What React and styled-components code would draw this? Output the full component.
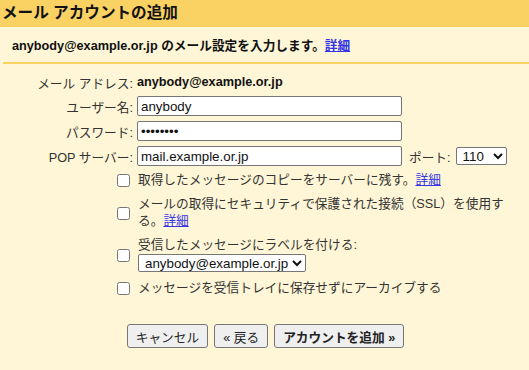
import React, { useState } from 'react';
import styled, { createGlobalStyle } from 'styled-components';

const GlobalStyle = createGlobalStyle`
  html, body {
    margin: 0;
    padding: 0;
    background: #fef6d6;
  }
  body {
    font-family: "Liberation Sans", "Noto Sans CJK JP", sans-serif;
    font-size: 12.7px;
    color: #222;
  }
`;

const Page = styled.div`
  width: 529px;
  min-height: 370px;
  background: #fef6d6;
`;

const Title = styled.h1`
  margin: 0;
  height: 27px;
  line-height: 25px;
  padding-left: 2px;
  background: #fad163;
  font-size: 15.6px;
  font-weight: bold;
  color: #111;
`;

const Intro = styled.div`
  display: flex;
  align-items: center;
  height: 35px;
  margin-left: 3px;
  padding-left: 9px;
  border-bottom: 2px solid #fad163;
  font-weight: bold;
  color: #111;
`;

const Link = styled.a`
  color: #3535e8;
  text-decoration: underline;
  font-weight: ${(p) => (p.$bold ? 'bold' : 'normal')};
  cursor: pointer;
`;

const FormGrid = styled.div`
  display: grid;
  grid-template-columns: 133px auto;
  column-gap: 4px;
  row-gap: 5px;
  padding-top: 9px;
`;

const Label = styled.label`
  display: flex;
  align-items: center;
  justify-content: flex-end;
  height: ${(p) => p.$h || 20}px;
  color: #333;
`;

const Value = styled.div`
  display: flex;
  align-items: center;
  height: ${(p) => p.$h || 20}px;
  font-weight: bold;
  color: #111;
`;

const FieldCell = styled.div`
  display: flex;
  align-items: center;
  gap: 7px;
`;

const TextInput = styled.input`
  box-sizing: border-box;
  width: 265px;
  height: 20px;
  margin: 0;
  padding: 1px 3px;
  border: 1px solid #767676;
  border-radius: 2px;
  background: #fff;
  font-family: "Liberation Sans", "Noto Sans CJK JP", sans-serif;
  font-size: 13.33px;
  color: #111;
`;

const PortLabel = styled.span`
  color: #333;
`;

const Select = styled.select`
  box-sizing: border-box;
  width: ${(p) => (p.$w ? `${p.$w}px` : 'auto')};
  height: 18px;
  margin: 0 0 0 ${(p) => p.$shift || 0}px;
  padding: 0 0 0 2px;
  border: 1px solid #767676;
  border-radius: 2px;
  background: #fff;
  font-family: "Liberation Sans", "Noto Sans CJK JP", sans-serif;
  font-size: 13.33px;
  color: #111;
`;

const Options = styled.div`
  display: flex;
  flex-direction: column;
  gap: 7px;
  margin-top: 6px;
  padding-left: 117px;
`;

const OptionRow = styled.label`
  display: flex;
  align-items: center;
  gap: 8px;
`;

const Check = styled.input`
  flex: none;
  width: 13px;
  height: 13px;
  margin: 0;
`;

const OptionText = styled.div`
  max-width: 370px;
  line-height: 17px;
  color: #333;
`;

const Actions = styled.div`
  display: flex;
  justify-content: center;
  gap: 6px;
  margin-top: 27px;
  padding-left: 2px;
`;

const Button = styled.button`
  height: 24px;
  padding: 0 8px;
  border: 1px solid #767676;
  border-radius: 3px;
  background: #efefef;
  font-family: "Liberation Sans", "Noto Sans CJK JP", sans-serif;
  font-size: 12.7px;
  font-weight: ${(p) => (p.$primary ? 'bold' : 'normal')};
  color: #222;
`;

export default function App() {
  const [user, setUser] = useState('anybody');
  const [pass, setPass] = useState('password');
  const [server, setServer] = useState('mail.example.or.jp');

  return (
    <Page>
      <GlobalStyle />
      <Title>メール アカウントの追加</Title>
      <Intro>
        anybody@example.or.jp のメール設定を入力します。
        <Link $bold>詳細</Link>
      </Intro>

      <FormGrid>
        <Label $h={18}>メール アドレス:</Label>
        <Value $h={18}>anybody@example.or.jp</Value>

        <Label>ユーザー名:</Label>
        <FieldCell>
          <TextInput value={user} onChange={(e) => setUser(e.target.value)} />
        </FieldCell>

        <Label>パスワード:</Label>
        <FieldCell>
          <TextInput type="password" value={pass} onChange={(e) => setPass(e.target.value)} />
        </FieldCell>

        <Label>POP サーバー:</Label>
        <FieldCell>
          <TextInput value={server} onChange={(e) => setServer(e.target.value)} />
          <PortLabel>ポート:</PortLabel>
          <Select $w={51} $shift={-2} defaultValue="110">
            <option value="110">110</option>
            <option value="995">995</option>
          </Select>
        </FieldCell>
      </FormGrid>

      <Options>
        <OptionRow>
          <Check type="checkbox" />
          <OptionText>
            取得したメッセージのコピーをサーバーに残す。<Link>詳細</Link>
          </OptionText>
        </OptionRow>
        <OptionRow>
          <Check type="checkbox" />
          <OptionText>
            メールの取得にセキュリティで保護された接続（SSL）を使用する。<Link>詳細</Link>
          </OptionText>
        </OptionRow>
        <OptionRow>
          <Check type="checkbox" />
          <OptionText>
            受信したメッセージにラベルを付ける:
            <br />
            <Select defaultValue="anybody@example.or.jp">
              <option value="anybody@example.or.jp">anybody@example.or.jp</option>
            </Select>
          </OptionText>
        </OptionRow>
        <OptionRow>
          <Check type="checkbox" />
          <OptionText>メッセージを受信トレイに保存せずにアーカイブする</OptionText>
        </OptionRow>
      </Options>

      <Actions>
        <Button>キャンセル</Button>
        <Button>« 戻る</Button>
        <Button $primary>アカウントを追加 »</Button>
      </Actions>
    </Page>
  );
}
